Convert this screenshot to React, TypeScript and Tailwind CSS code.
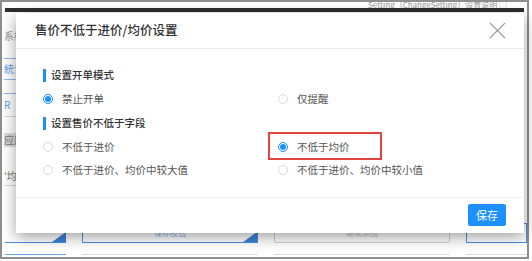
import React from "react";

const font = { fontFamily: '"Noto Sans CJK SC", "Liberation Sans", sans-serif' };

function Radio({ checked }: { checked?: boolean }) {
  return (
    <span
      className={
        checked
          ? "flex h-[10px] w-[10px] shrink-0 items-center justify-center rounded-full border border-[#1890ff] bg-white"
          : "flex h-[10px] w-[10px] shrink-0 items-center justify-center rounded-full border border-[#dcdcdc] bg-white"
      }
    >
      {checked && <span className="h-[6px] w-[6px] rounded-full bg-[#1890ff]" />}
    </span>
  );
}

function Option({ label, checked }: { label: string; checked?: boolean }) {
  return (
    <div className="flex items-center gap-[9px]">
      <Radio checked={checked} />
      <span className="text-[10.5px] leading-none text-[#555]">{label}</span>
    </div>
  );
}

function SectionTitle({ children }: { children: React.ReactNode }) {
  return (
    <div className="flex h-[24px] items-center gap-[5px]">
      <span className="h-[13px] w-[3px] bg-[#1890ff]" />
      <span className="text-[10.5px] font-medium leading-none text-[#333]">{children}</span>
    </div>
  );
}

function Row({ h, left, right }: { h: string; left: React.ReactNode; right: React.ReactNode }) {
  return (
    <div className={`grid grid-cols-[235px_1fr] items-center ${h}`}>
      <div>{left}</div>
      <div>{right}</div>
    </div>
  );
}

export default function App() {
  return (
    <div className="relative h-[261px] w-[532px] overflow-hidden bg-white" style={font}>
      {/* page behind the dialog */}
      <div className="flex h-[259px] w-[529px] flex-col border-2 border-[#8e8e8e] bg-white">
        <div className="flex h-[6px] justify-end overflow-hidden pr-[20px] text-[8px] leading-[5px] text-[#999]">
          <span>Setting（ChangeSetting）设置说明 ◯</span>
        </div>
        <div className="mx-[3px] h-[4px] bg-[#2e2e2e]" />
        <div className="flex flex-1">
          <div className="flex w-[64px] flex-col pl-[2px] text-[10px] text-[#9a9a9a]">
            <div className="h-[14px]" />
            <div className="h-[20px] leading-[20px]">系框</div>
            <div className="mt-[12px] h-px w-[40px] bg-[#8cb8e6]" />
            <div className="h-[20px] leading-[20px] text-[#5a9be0]">統计</div>
            <div className="h-px w-[40px] bg-[#8cb8e6]" />
            <div className="mt-[13px] h-px w-[40px] bg-[#8cb8e6]" />
            <div className="h-[22px] leading-[22px] text-[#5a9be0]">R</div>
            <div className="h-px w-[40px] bg-[#d8d8d8]" />
            <div className="mt-[16px] h-[14px] w-[40px] bg-[#dadada] leading-[14px] text-[#777]">应用</div>
            <div className="mt-[20px] h-[18px] leading-[18px] text-[#777]">'均</div>
            <div className="h-px w-[40px] bg-[#d8d8d8]" />
          </div>
        </div>
        <div className="flex h-[20px] items-stretch gap-[16px] pl-[3px]">
          <div className="relative w-[61px] border-b border-[#4a90e2]">
            <span className="absolute bottom-0 right-0 h-0 w-0 border-b-[10px] border-l-[14px] border-b-[#3b82d6] border-l-transparent" />
          </div>
          <div className="relative flex w-[176px] items-center justify-center border border-[#4a90e2] text-[8px] text-[#8db6e6]">
            <span className="leading-[10px]">保存按钮</span>
            <span className="absolute bottom-0 right-0 h-0 w-0 border-b-[10px] border-l-[14px] border-b-[#3b82d6] border-l-transparent" />
          </div>
          <div className="flex w-[176px] items-center justify-center rounded-[2px] border border-[#d0d0d0] text-[8px] text-[#bbb]">
            <span className="leading-[10px]">继续添加</span>
          </div>
          <div className="flex-1 border border-[#4a90e2]" />
        </div>
        <div className="flex h-[14px] items-end gap-[16px] pb-[2px] pl-[3px]">
          <div className="h-px w-[61px] bg-[#6aa5e8]" />
          <div className="h-px w-[176px] bg-[#dedede]" />
          <div className="h-px w-[176px] bg-[#dedede]" />
          <div className="h-px flex-1 bg-[#dedede]" />
        </div>
      </div>

      {/* dialog */}
      <div className="absolute left-[16px] top-[13px] flex w-[508px] flex-col bg-white shadow-[0_4px_14px_rgba(0,0,0,0.38)]">
        <div className="flex h-[36px] items-center justify-between border-b border-[#e8e8e8] pl-[19px] pr-[18px]">
          <span className="text-[12.5px] font-medium text-[#333]">售价不低于进价/均价设置</span>
          <svg width="17" height="17" viewBox="0 0 17 17" fill="none" stroke="#9a9a9a" strokeWidth="1.1">
            <path d="M1 1L16 16M16 1L1 16" />
          </svg>
        </div>
        <div className="flex h-[148px] flex-col pl-[27px] pt-[14px]">
          <SectionTitle>设置开单模式</SectionTitle>
          <Row h="h-[24px]" left={<Option label="禁止开单" checked />} right={<Option label="仅提醒" />} />
          <SectionTitle>设置售价不低于字段</SectionTitle>
          <Row h="h-[24px]" left={<Option label="不低于进价" />} right={<Option label="不低于均价" checked />} />
          <Row
            h="h-[22px]"
            left={<Option label="不低于进价、均价中较大值" />}
            right={<Option label="不低于进价、均价中较小值" />}
          />
        </div>
        <div className="flex h-[36px] items-start justify-end border-t border-[#f0f0f0] pr-[18px] pt-[6px]">
          <button className="h-[22px] w-[38px] rounded-[2px] bg-[#1e90ff] text-[11px] text-white">保存</button>
        </div>
      </div>

      {/* annotation */}
      <div className="absolute left-[268px] top-[132px] h-[28px] w-[114px] border-2 border-[#e0463f]" />
    </div>
  );
}
